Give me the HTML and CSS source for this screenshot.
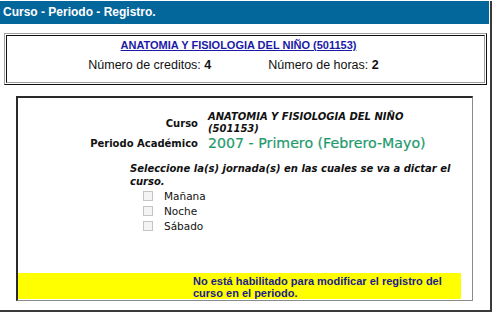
FILE: index.html
```html
<!DOCTYPE html>
<html lang="es">
<head>
<meta charset="utf-8">
<title>Curso - Periodo - Registro.</title>
<link rel="stylesheet" href="styles.css">
</head>
<body>
<div class="frame">
  <div class="header">Curso - Periodo - Registro.</div>
  <div class="summary">
    <div class="summary-cell">
      <a class="course-link" href="#">ANATOMIA Y FISIOLOGIA DEL NIÑO (501153)</a>
      <div class="counts">
        <span>Número de creditos: <b>4</b></span>
        <span>Número de horas: <b>2</b></span>
      </div>
    </div>
  </div>
  <div class="panel">
    <div class="info">
      <div class="label">Curso</div>
      <div class="value course">ANATOMIA Y FISIOLOGIA DEL NIÑO (501153)</div>
      <div class="label">Periodo Académico</div>
      <div class="value period">2007 - Primero (Febrero-Mayo)</div>
    </div>
    <div class="jornadas">
      <p class="prompt">Seleccione la(s) jornada(s) en las cuales se va a dictar el curso.</p>
      <label class="option"><span class="box"></span>Mañana</label>
      <label class="option"><span class="box"></span>Noche</label>
      <label class="option"><span class="box"></span>Sábado</label>
    </div>
    <div class="notice">
      <div class="notice-pad"></div>
      <div class="notice-text">No está habilitado para modificar el registro del curso en el periodo.</div>
    </div>
  </div>
</div>
</body>
</html>
```
FILE: styles.css
```css
html, body {
  margin: 0;
  padding: 0;
  background: #ffffff;
}

.frame {
  width: 490px;
  height: 309px;
  border-right: 2px solid #3a3a3a;
  border-bottom: 2px solid #3a3a3a;
  font-family: "Liberation Sans", Arial, sans-serif;
}

.header {
  width: 486px;
  height: 23px;
  margin-top: 1px;
  padding-left: 3px;
  background: #04679b;
  color: #ffffff;
  font-weight: bold;
  font-size: 12px;
  line-height: 23px;
}

.summary {
  margin: 9px 0 0 4px;
  width: 479px;
  height: 48px;
  padding: 1px;
  border: 1px solid;
  border-color: #a0a0a0 #101010 #101010 #a0a0a0;
}

.summary-cell {
  height: 46px;
  border: 1px solid;
  border-color: #101010 #a0a0a0 #a0a0a0 #101010;
  text-align: center;
}

.course-link {
  display: block;
  margin: 3px 14px 0 0;
  color: #1a1aa6;
  font-weight: bold;
  font-size: 11px;
  line-height: 13px;
  text-decoration: underline;
}

.counts {
  display: flex;
  justify-content: center;
  gap: 57px;
  margin: 6px 24px 0 0;
  font-size: 12.5px;
  line-height: 14px;
  color: #111111;
}

.panel {
  margin: 11px 0 0 16px;
  width: 454px;
  height: 202px;
  border: 1px solid #8a8a8a;
  border-left: 2px solid #2a2a2a;
  border-top: 2px solid #2a2a2a;
  font-family: "DejaVu Sans", Verdana, sans-serif;
  color: #111111;
}

.info {
  display: grid;
  grid-template-columns: 180px 230px;
  column-gap: 10px;
  align-items: center;
  padding-top: 13px;
}

.label {
  text-align: right;
  font-weight: bold;
  font-size: 10px;
}

.value.course {
  font-weight: bold;
  font-style: italic;
  font-size: 10px;
  line-height: 12px;
}

.value.period {
  color: #1f9a6c;
  font-size: 14.2px;
  line-height: 16px;
  -webkit-text-stroke: 0.2px #1f9a6c;
}

.jornadas {
  margin: 11px 0 0 112px;
}

.prompt {
  margin: 0;
  width: 330px;
  font-weight: bold;
  font-style: italic;
  font-size: 10px;
  line-height: 13px;
}

.option {
  display: flex;
  align-items: center;
  height: 15px;
  padding-left: 13px;
  font-size: 10.5px;
}

.box {
  width: 8px;
  height: 8px;
  margin-right: 11px;
  border: 1px solid #c4c4c4;
  background: #f4f4f4;
}

.notice {
  display: flex;
  margin-top: 40px;
  width: 443px;
  background: #ffff00;
  font-family: "Liberation Sans", Arial, sans-serif;
}

.notice-pad {
  width: 175px;
}

.notice-text {
  width: 268px;
  padding: 2px 0 0;
  color: #1c1c8e;
  font-weight: bold;
  font-size: 11px;
  line-height: 12px;
}
```
